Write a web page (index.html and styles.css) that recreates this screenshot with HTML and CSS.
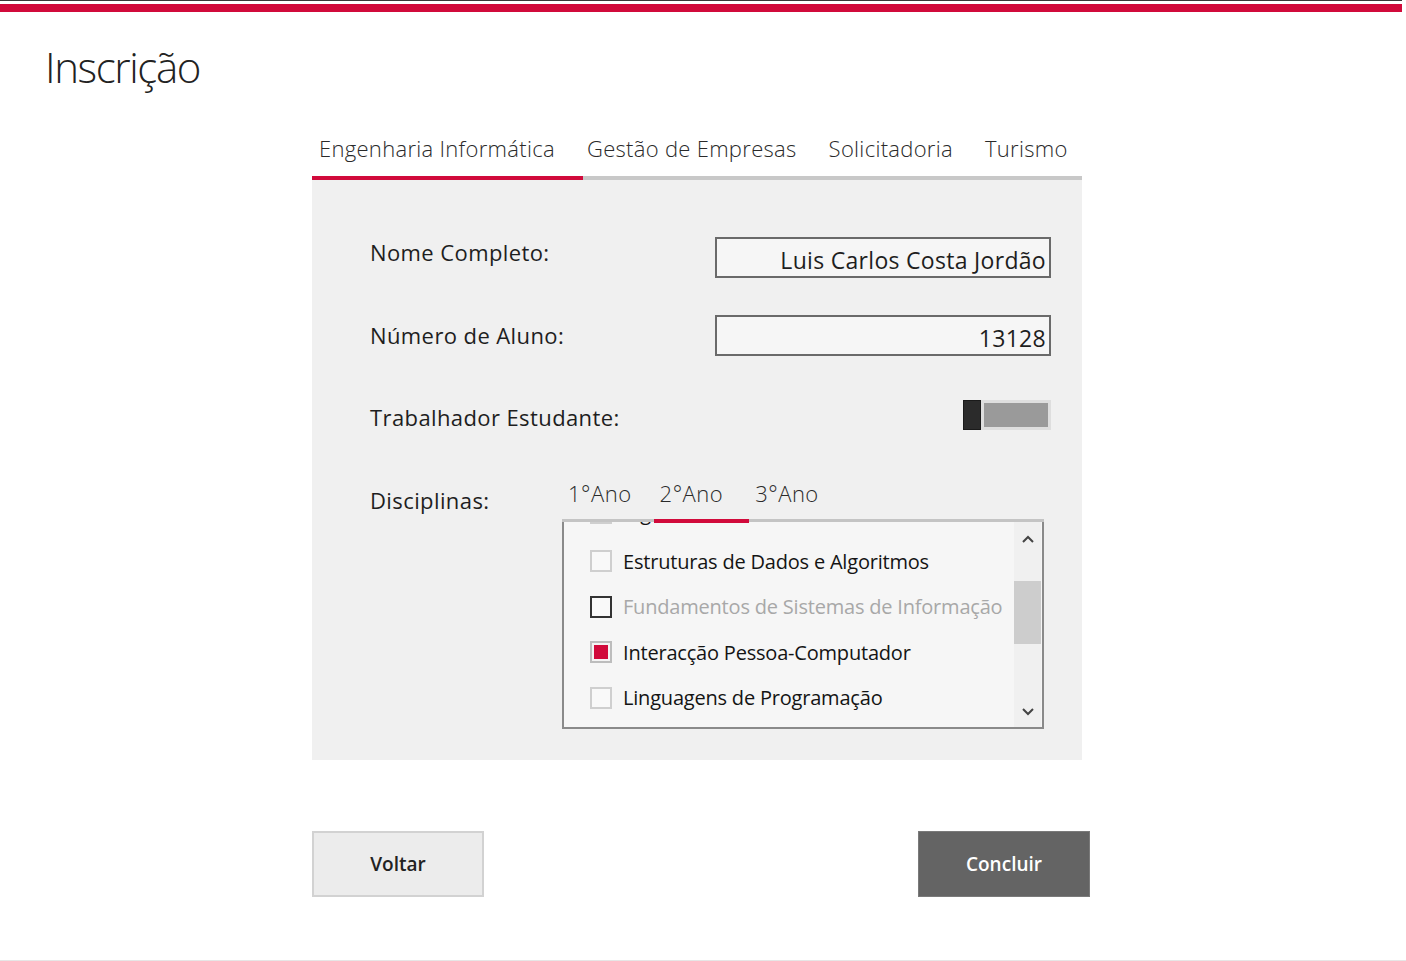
FILE: index.html
```html
<!DOCTYPE html>
<html lang="pt">
<head>
<meta charset="utf-8">
<title>Inscrição</title>
<link rel="stylesheet" href="styles.css">
</head>
<body>
<div class="topbar"></div>
<h1 class="title">Inscrição</h1>
<main class="content">
  <nav class="tabs">
    <span class="tab active">Engenharia Informática</span>
    <span class="tab">Gestão de Empresas</span>
    <span class="tab">Solicitadoria</span>
    <span class="tab">Turismo</span>
  </nav>
  <section class="panel">
    <div class="row row-name">
      <label class="label">Nome Completo:</label>
      <div class="input">Luis Carlos Costa Jordão</div>
    </div>
    <div class="row row-num">
      <label class="label">Número de Aluno:</label>
      <div class="input">13128</div>
    </div>
    <div class="row row-toggle">
      <label class="label">Trabalhador Estudante:</label>
      <div class="toggle"><span class="knob"></span><span class="track"></span></div>
    </div>
    <div class="row row-disc">
      <label class="label">Disciplinas:</label>
      <div class="subtabs">
        <div class="subtab-head">
          <span class="subtab">1°Ano</span>
          <span class="subtab active">2°Ano</span>
          <span class="subtab">3°Ano</span>
        </div>
        <div class="listbox">
          <div class="list-viewport">
            <ul class="list">
              <li class="item partial"><span class="check"></span>Álgebra Linear</li>
              <li class="item"><span class="check"></span>Estruturas de Dados e Algoritmos</li>
              <li class="item disabled"><span class="check dark"></span>Fundamentos de Sistemas de Informação</li>
              <li class="item"><span class="check checked"></span>Interacção Pessoa-Computador</li>
              <li class="item"><span class="check"></span>Linguagens de Programação</li>
            </ul>
          </div>
          <div class="scrollbar">
            <svg class="arrow" width="14" height="10" viewBox="0 0 14 10"><path d="M2 8 L7 3 L12 8" fill="none" stroke="#444" stroke-width="2"/></svg>
            <div class="thumb-area"><div class="thumb"></div></div>
            <svg class="arrow" width="14" height="10" viewBox="0 0 14 10"><path d="M2 2 L7 7 L12 2" fill="none" stroke="#444" stroke-width="2"/></svg>
          </div>
        </div>
      </div>
    </div>
  </section>
  <div class="actions">
    <button class="btn btn-back">Voltar</button>
    <button class="btn btn-done">Concluir</button>
  </div>
</main>
<div class="footer-line"></div>
</body>
</html>
```

FILE: styles.css
```css
* { box-sizing: border-box; }
html, body { margin: 0; padding: 0; background: #fff; }
body {
  font-family: "Open Sans", "Noto Sans", sans-serif;
  color: #1e1e1e;
  width: 1406px;
  height: 961px;
  overflow: hidden;
  position: relative;
}
.topbar {
  width: 1402px;
  height: 12px;
  border-top: 1px solid #3a3a3a;
  border-bottom: 8px solid #d10a3b;
  background: #fff;
}
.title {
  margin: 30px 0 0 45px;
  font-weight: 300;
  font-size: 42px;
  line-height: 50px;
  color: #222;
  letter-spacing: -1.4px;
}
.content {
  margin: 33px 0 0 312px;
  width: 778px;
}
.tabs {
  display: flex;
  width: 770px;
  border-bottom: 4px solid #c8c8c8;
  height: 55px;
}
.tab {
  flex: none;
  white-space: nowrap;
  font-size: 22px;
  font-weight: 300;
  color: #2a2a2a;
  padding: 0 28px 0 4px;
  line-height: 47px;
  height: 55px;
  margin-bottom: -4px;
  border-bottom: 4px solid transparent;
  letter-spacing: 0.3px;
}
.tab:first-child { padding-left: 7px; }
.tab:last-child { padding-right: 0; }
.tab.active { border-bottom-color: #d10a3b; }
.panel {
  width: 770px;
  height: 580px;
  background: #f0f0f0;
  padding: 57px 31px 0 58px;
}
.row {
  display: flex;
  justify-content: space-between;
  align-items: flex-start;
}
.label {
  font-size: 22px;
  line-height: 30px;
  color: #1e1e1e;
  letter-spacing: 0.4px;
  white-space: nowrap;
}
.input {
  width: 336px;
  height: 41px;
  border: 2px solid #6a6a6a;
  background: #f6f6f6;
  font-size: 23px;
  line-height: 42px;
  text-align: right;
  padding-right: 3px;
  color: #1e1e1e;
  letter-spacing: 0.3px;
  white-space: nowrap;
}
.row-num { margin-top: 37px; }
.row-num .label { margin-top: 5px; }
.row-toggle { margin-top: 44px; }
.row-toggle .label { margin-top: 2px; }
.toggle {
  display: flex;
  width: 88px;
  height: 30px;
}
.knob {
  width: 18px;
  height: 30px;
  background: #2b2b2b;
  border: 1px solid #1a1a1a;
}
.track {
  flex: 1;
  height: 30px;
  background: #9a9a9a;
  border: 3px solid #dedede;
}
.row-disc { margin-top: 49px; justify-content: flex-start; }
.row-disc .label { margin-top: 4px; width: 192px; }
.subtabs { width: 482px; }
.subtab-head {
  display: flex;
  height: 41px;
  border-bottom: 3px solid #c4c4c4;
}
.subtab {
  flex: none;
  white-space: nowrap;
  font-size: 22px;
  font-weight: 300;
  line-height: 24px;
  padding: 0 22px 0 6px;
  height: 42px;
  margin-bottom: -4px;
  border-bottom: 4px solid transparent;
  color: #2a2a2a;
  letter-spacing: 0.5px;
}
.subtab.active { border-bottom-color: #d10a3b; padding-right: 26px; }
.listbox {
  display: flex;
  height: 207px;
  border: 2px solid #8a8a8a;
  border-top: none;
  background: #f6f6f6;
}
.list-viewport {
  flex: 1;
  overflow: hidden;
}
.list {
  list-style: none;
  margin: -32px 0 0 0;
  padding: 0 0 0 26px;
}
.item {
  display: flex;
  align-items: center;
  height: 45.5px;
  font-size: 20px;
  color: #141414;
  letter-spacing: -0.2px;
  white-space: nowrap;
}
.item.partial {
  align-items: flex-start;
  height: 48.5px;
  padding-top: 12px;
  line-height: 22px;
}
.item.disabled { color: #a8a8a8; }
.check {
  width: 22px;
  height: 22px;
  border: 2px solid #cfcfcf;
  background: #f9f9f9;
  margin-right: 11px;
  flex: none;
}
.check.dark { border-color: #333; }
.check.checked {
  border-color: #bdbdbd;
  background: #d10a3b;
  box-shadow: inset 0 0 0 2px #f4f4f4;
}
.scrollbar {
  width: 27px;
  margin-right: 1px;
  background: #f0f0f0;
  display: flex;
  flex-direction: column;
  align-items: center;
}
.arrow { margin: 12px 0 6px; flex: none; }
.arrow:last-child { margin: 6px 0 10px; }
.thumb-area { flex: 1; width: 100%; }
.thumb {
  margin-top: 31px;
  height: 63px;
  background: #cdcdcd;
}
.actions {
  display: flex;
  justify-content: space-between;
  margin-top: 71px;
}
.btn {
  width: 172px;
  height: 66px;
  font-family: "Open Sans", "Noto Sans", sans-serif;
  font-size: 19px;
  font-weight: 600;
  cursor: pointer;
}
.btn-back {
  background: #ececec;
  border: 2px solid #d2d2d2;
  color: #222;
}
.btn-done {
  background: #646464;
  border: 1px solid #7a7a7a;
  color: #fff;
}
.footer-line {
  position: absolute;
  left: 0;
  bottom: 0;
  width: 1406px;
  height: 1px;
  background: #e6e6e6;
}
```
